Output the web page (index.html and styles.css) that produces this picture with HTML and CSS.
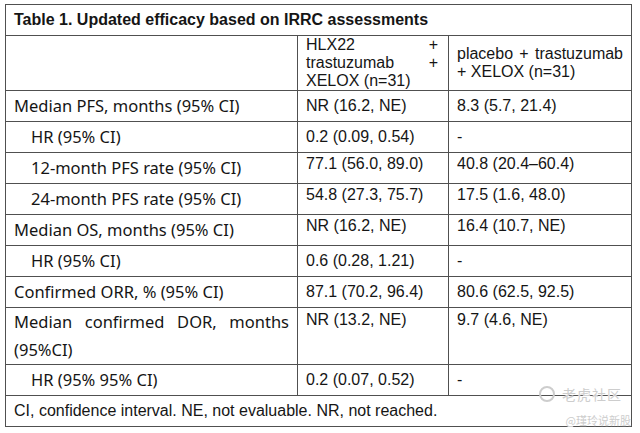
FILE: index.html
```html
<!DOCTYPE html>
<html>
<head>
<meta charset="utf-8">
<link rel="stylesheet" href="styles.css">
</head>
<body>
<div class="page">
<table class="eff">
  <colgroup>
    <col class="c1"><col class="c2"><col class="c3">
  </colgroup>
  <tr class="title"><td colspan="3">Table 1. Updated efficacy based on IRRC assessments</td></tr>
  <tr class="head">
    <td class="lab"></td>
    <td class="hx">HLX22 + trastuzumab + XELOX (n=31)</td>
    <td class="hp">placebo + trastuzumab + XELOX (n=31)</td>
  </tr>
  <tr><td class="lab">Median PFS, months (95% CI)</td><td>NR (16.2, NE)</td><td>8.3 (5.7, 21.4)</td></tr>
  <tr><td class="lab ind">HR (95% CI)</td><td>0.2 (0.09, 0.54)</td><td>-</td></tr>
  <tr class="hi"><td class="lab ind">12-month PFS rate (95% CI)</td><td>77.1 (56.0, 89.0)</td><td>40.8 (20.4–60.4)</td></tr>
  <tr class="hi"><td class="lab ind">24-month PFS rate (95% CI)</td><td>54.8 (27.3, 75.7)</td><td>17.5 (1.6, 48.0)</td></tr>
  <tr class="hi"><td class="lab">Median OS, months (95% CI)</td><td>NR (16.2, NE)</td><td>16.4 (10.7, NE)</td></tr>
  <tr><td class="lab ind">HR (95% CI)</td><td>0.6 (0.28, 1.21)</td><td>-</td></tr>
  <tr><td class="lab">Confirmed ORR, % (95% CI)</td><td>87.1 (70.2, 96.4)</td><td>80.6 (62.5, 92.5)</td></tr>
  <tr class="dor"><td class="lab just">Median confirmed DOR, months (95%CI)</td><td>NR (13.2, NE)</td><td>9.7 (4.6, NE)</td></tr>
  <tr><td class="lab ind">HR (95% 95% CI)</td><td>0.2 (0.07, 0.52)</td><td>-</td></tr>
  <tr class="foot"><td colspan="3">CI, confidence interval. NE, not evaluable. NR, not reached.</td></tr>
</table>
<div class="wm">
  <div class="wm1"><span class="logo"></span>老虎社区</div>
  <div class="wm2">@瑾玲说新股</div>
</div>
</div>
</body>
</html>
```
FILE: styles.css
```css
html, body {
  margin: 0;
  padding: 0;
  background: #ffffff;
}
.page {
  position: relative;
  width: 640px;
  height: 433px;
  padding: 4px 0 0 5px;
  box-sizing: border-box;
}
.eff {
  border-collapse: collapse;
  table-layout: fixed;
  width: 626px;
  font-family: "Liberation Sans", Arial, sans-serif;
  font-size: 16px;
  color: #151515;
}
.c1 { width: 292px; }
.c2 { width: 151px; }
.c3 { width: 183px; }
.eff td {
  border: 1px solid #505050;
  padding: 6px 8px;
  line-height: 18px;
  vertical-align: middle;
  white-space: nowrap;
}
.eff .title td {
  font-weight: bold;
  padding: 6px 8px;
}
.eff .head td { padding: 0 8px; white-space: normal; }
.eff .head .hx { text-align: justify; text-align-last: left; padding-right: 10px; }
.eff .head .hp { text-align: justify; text-align-last: left; }
.eff td.lab {
  font-family: "Noto Sans", "Open Sans", sans-serif;
  font-size: 16.5px;
}
.eff td.ind { padding-left: 25px; }
.eff .hi td { vertical-align: top; padding-top: 2px; padding-bottom: 10px; }
.eff .hi td.lab { vertical-align: middle; padding-top: 6px; padding-bottom: 6px; }
.eff .dor td { vertical-align: top; padding-top: 3px; }
.eff .dor td.lab {
  white-space: normal;
  line-height: 28px;
  padding: 0 8px;
  text-align: justify;
}
.eff .foot td { padding: 6px 8px; }
.wm {
  position: absolute;
  right: 9px;
  bottom: 6px;
  color: #cdcdcd;
  font-family: "Noto Sans CJK SC", sans-serif;
  text-align: right;
  text-shadow: 0 0 1px #fff, 0 0 1px #fff;
}
.wm1 {
  font-size: 14px;
  line-height: 18px;
  letter-spacing: 1px;
  display: flex;
  align-items: center;
  justify-content: flex-end;
  gap: 7px;
  margin-right: 9px;
}
.logo {
  width: 12px;
  height: 12px;
  border: 2px solid #cdcdcd;
  border-radius: 50%;
}
.wm2 {
  font-size: 11px;
  line-height: 14px;
  margin-top: 10px;
}
```
